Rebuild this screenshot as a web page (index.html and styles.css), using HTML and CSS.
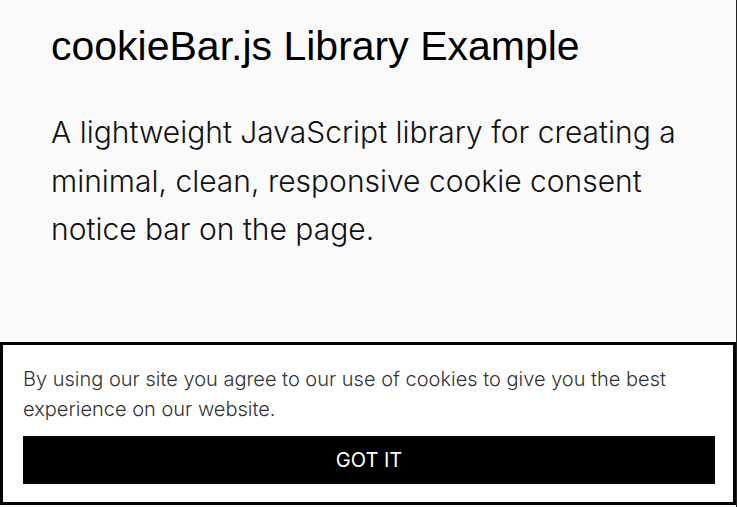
FILE: index.html
```html
<!DOCTYPE html>
<html lang="en">
<head>
<meta charset="utf-8">
<title>cookieBar.js Library Example</title>
<link rel="stylesheet" href="styles.css">
</head>
<body>
<main class="page">
  <h1 class="title">cookieBar.js Library Example</h1>
  <p class="lead">A lightweight JavaScript library for creating a minimal, clean, responsive cookie consent notice bar on the page.</p>
</main>
<div class="edge"></div>
<div class="cookie-bar">
  <p class="cookie-text">By using our site you agree to our use of cookies to give you the best experience on our website.</p>
  <button class="cookie-btn" type="button">GOT IT</button>
</div>
</body>
</html>
```
FILE: styles.css
```css
html, body {
  margin: 0;
  padding: 0;
  background: #fafafa;
  color: #111;
  font-family: "Inter", "Liberation Sans", sans-serif;
}
.page {
  padding: 22px 50px 0 51px;
}
.title {
  margin: 0;
  font-family: "Liberation Sans", Arial, sans-serif;
  font-size: 41px;
  font-weight: 400;
  line-height: 48px;
  color: #000;
}
.lead {
  margin: 38px 0 0;
  font-size: 30px;
  font-weight: 300;
  line-height: 48.5px;
  color: #111;
}
.edge {
  position: fixed;
  top: 0;
  right: 0;
  width: 1px;
  height: 100%;
  background: #222;
}
.cookie-bar {
  position: fixed;
  left: 0;
  right: 1px;
  bottom: 2px;
  box-sizing: border-box;
  background: #fff;
  border: 3px solid #000;
  padding: 19px 18px 18px 20px;
}
.cookie-text {
  margin: 0 0 12px;
  font-size: 20px;
  font-weight: 300;
  line-height: 30px;
  color: #333;
}
.cookie-btn {
  display: block;
  width: 100%;
  height: 48px;
  border: 0;
  background: #000;
  color: #fff;
  font-family: "Inter", "Liberation Sans", sans-serif;
  font-size: 20px;
  font-weight: 400;
  cursor: pointer;
}
```
